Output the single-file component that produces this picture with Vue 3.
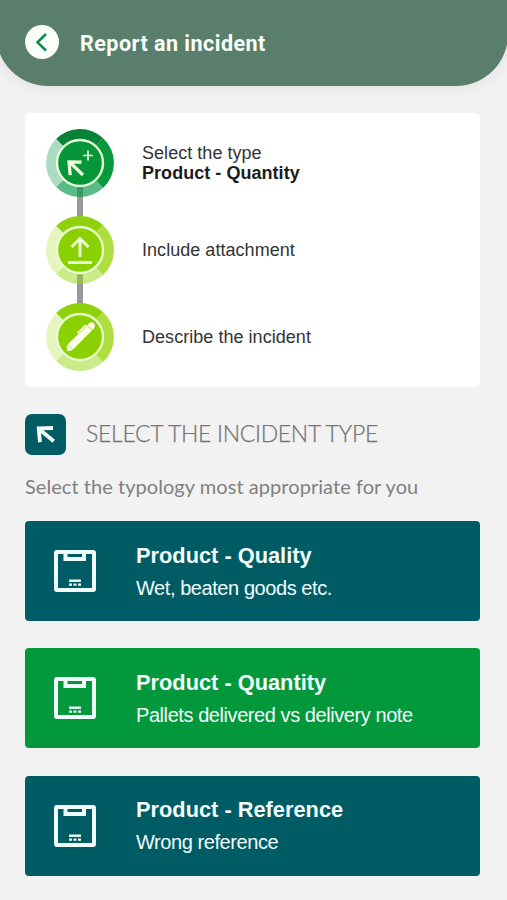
<template>
  <div class="page">
    <header class="top-bar">
      <button class="back" aria-label="Back">
        <svg width="34" height="34" viewBox="0 0 34 34">
          <path d="M21 9 L12.5 17.3 L21 25.5" fill="none" stroke="#0b8a48" stroke-width="2.5" />
        </svg>
      </button>
      <h1>Report an incident</h1>
    </header>

    <main>
      <section class="steps">
        <div v-for="step in steps" :key="step.icon" class="step" :class="step.tone">
          <svg class="step-icon" width="68" height="68" viewBox="-34 -34 68 68">
            <path class="q-top" d="M0 0 L-24 -24 A34 34 0 0 1 23 -25 Z" />
            <path class="q-right" d="M0 0 L23 -25 A34 34 0 0 1 23 25 Z" />
            <path class="q-bottom" d="M0 0 L23 25 A34 34 0 0 1 -24 24 Z" />
            <path class="q-left" d="M0 0 L-24 24 A34 34 0 0 1 -24 -24 Z" />
            <circle class="disc" r="23" />
            <g v-if="step.icon === 'type'" class="line">
              <path d="M3 12 L-10 -0.5 M-9.8 12.2 L-11 -1.2 L1.5 -0.8" stroke-width="3.2" />
              <path d="M8 -12.5 V-2.5 M3 -7.5 H13" stroke-width="1.7" />
            </g>
            <g v-else-if="step.icon === 'attachment'" class="line">
              <path d="M0 7 V-11 M-8.5 -3 L0 -11.5 L8.5 -3" stroke-width="2.9" />
              <path d="M-12 12.5 H12" stroke-width="2.8" />
            </g>
            <g v-else transform="rotate(-45)">
              <path class="pen" d="M-19 0.5 L-15.5 -3 L-13 -3.4 H1 V-5.2 H12 L13 -3.4 H15.5 Q19.5 -3 19.5 0 Q19.5 3.6 15.5 3.8 H-13 L-16 3.4 Z" />
              <path class="pen-detail" d="M-13.8 -2.8 V3.2 M13.5 -3.2 V3.5 M1 -3.2 H11" />
            </g>
          </svg>
          <div class="step-text">
            <span>{{ step.label }}</span>
            <strong v-if="step.value">{{ step.value }}</strong>
          </div>
        </div>
      </section>

      <div class="heading">
        <span class="heading-icon">
          <svg width="41" height="41" viewBox="0 0 41 41">
            <path d="M14 15 L28.8 27.2 M15 28.2 L13.7 14.3 L28 14" fill="none" stroke="#f4fbfb" stroke-width="3.8" />
          </svg>
        </span>
        <h2>SELECT THE INCIDENT TYPE</h2>
      </div>
      <p class="hint">Select the typology most appropriate for you</p>

      <div class="options">
        <button
          v-for="(option, i) in options"
          :key="option.title"
          class="option"
          :class="{ selected: selected === i }"
          @click="selected = i"
        >
          <svg class="box" width="42" height="42" viewBox="0 0 42 42">
            <rect x="2" y="2" width="38" height="38" rx="1" stroke-width="4" />
            <path d="M11.5 2 V9 H30 V2" stroke-width="4" />
            <path d="M15 30.7 H27" stroke-width="2.4" />
            <path d="M15 34.7 H27" stroke-width="2.2" stroke-dasharray="3 1.5" />
          </svg>
          <span class="option-text">
            <strong>{{ option.title }}</strong>
            <span>{{ option.detail }}</span>
          </span>
        </button>
      </div>
    </main>
  </div>
</template>

<script setup>
import { ref, computed } from 'vue';

const options = [
  { title: 'Product - Quality', detail: 'Wet, beaten goods etc.' },
  { title: 'Product - Quantity', detail: 'Pallets delivered vs delivery note' },
  { title: 'Product - Reference', detail: 'Wrong reference' }
];

const selected = ref(1);

const steps = computed(() => [
  { icon: 'type', label: 'Select the type', value: options[selected.value].title, tone: 'current' },
  { icon: 'attachment', label: 'Include attachment', tone: 'pending' },
  { icon: 'describe', label: 'Describe the incident', tone: 'pending' }
]);
</script>

<style>
body {
  margin: 0;
  background: #f2f2f2;
}
</style>

<style scoped>
.page {
  height: 900px;
  overflow: hidden;
  background: #f2f2f2;
  font-family: "Liberation Sans", Arial, sans-serif;
}

.top-bar {
  display: flex;
  align-items: center;
  box-sizing: border-box;
  height: 86px;
  margin: 0 -1px 0 -4px;
  padding: 0 0 2px 29px;
  background: #597e6b;
  border-radius: 0 0 52px 52px;
  box-shadow: 0 2px 14px rgba(0, 0, 0, 0.07);
}

.back {
  width: 34px;
  height: 34px;
  padding: 0;
  border: none;
  border-radius: 50%;
  background: #fbfffc;
  cursor: pointer;
}

.back svg {
  display: block;
}

h1 {
  margin: 3px 0 0 21px;
  color: #f8fffa;
  font: 700 21.5px/26px Roboto, sans-serif;
  letter-spacing: 0.48px;
}

main {
  padding: 27px 27px 0 25px;
}

.steps {
  display: flex;
  flex-direction: column;
  gap: 19px;
  box-sizing: border-box;
  height: 274px;
  padding: 16px 21px;
  border-radius: 5px;
  background: #fff;
}

.step {
  position: relative;
  display: flex;
  align-items: center;
  height: 68px;
}

.step-icon {
  position: relative;
}

/* connector runs under the translucent lower sector */
.step:not(:last-child)::before {
  content: "";
  position: absolute;
  left: 31px;
  top: 57px;
  width: 6px;
  height: 31px;
  background: #999;
}

.step-text {
  display: flex;
  flex-direction: column;
  margin: 0 0 0 28px;
  color: #333;
  font-size: 18px;
  line-height: 20px;
  letter-spacing: 0.04px;
}

.step-text strong {
  color: #1c1c1c;
}

.current .q-top { fill: #078238; }
.current .q-right { fill: #079a3c; }
.current .q-bottom { fill: rgba(5, 150, 75, 0.66); }
.current .q-left { fill: #a9dcc2; }
.current .disc { fill: #059639; }
.pending .q-top { fill: #8fd20c; }
.pending .q-right { fill: #afdf3f; }
.pending .q-bottom { fill: rgba(150, 215, 20, 0.5); }
.pending .q-left { fill: #e6f5bd; }
.pending .disc { fill: #8bd000; }

.disc {
  stroke: #e5ffd0;
  stroke-width: 2.4;
}

.line {
  fill: none;
  stroke: #efffdc;
}

.pen {
  fill: #fcffec;
}

.pen-detail {
  fill: none;
  stroke: #a5d842;
  stroke-width: 0.9;
}

.heading {
  display: flex;
  align-items: center;
  gap: 20px;
  margin-top: 27px;
}

.heading-icon {
  width: 41px;
  height: 41px;
  border-radius: 7px;
  background: #005b63;
}

.heading-icon svg {
  display: block;
}

h2 {
  margin: 0 0 4px;
  color: #747474;
  font: 300 23px/28px Lato, sans-serif;
  letter-spacing: -0.3px;
  -webkit-text-stroke: 0.25px #747474;
  white-space: nowrap;
}

.hint {
  margin: 18px 0 0;
  color: #808080;
  font: 400 20px/26px Lato, sans-serif;
  letter-spacing: 0.05px;
  white-space: nowrap;
}

.options {
  display: flex;
  flex-direction: column;
  gap: 27.4px;
  margin-top: 22px;
}

.option {
  display: flex;
  align-items: center;
  height: 100px;
  padding: 0 0 0 29px;
  border: none;
  border-radius: 4px;
  background: #005c64;
  color: #f2fcfc;
  font-family: inherit;
  text-align: left;
  cursor: pointer;
}

.option.selected {
  background: #03983c;
}

.box {
  fill: none;
  stroke: #f0fcfb;
}

.option-text {
  display: flex;
  flex-direction: column;
  margin: 1px 0 0 40px;
  font-size: 20px;
  line-height: 32px;
  letter-spacing: -0.43px;
}

.option-text strong {
  font-size: 21.8px;
  letter-spacing: 0;
}
</style>
